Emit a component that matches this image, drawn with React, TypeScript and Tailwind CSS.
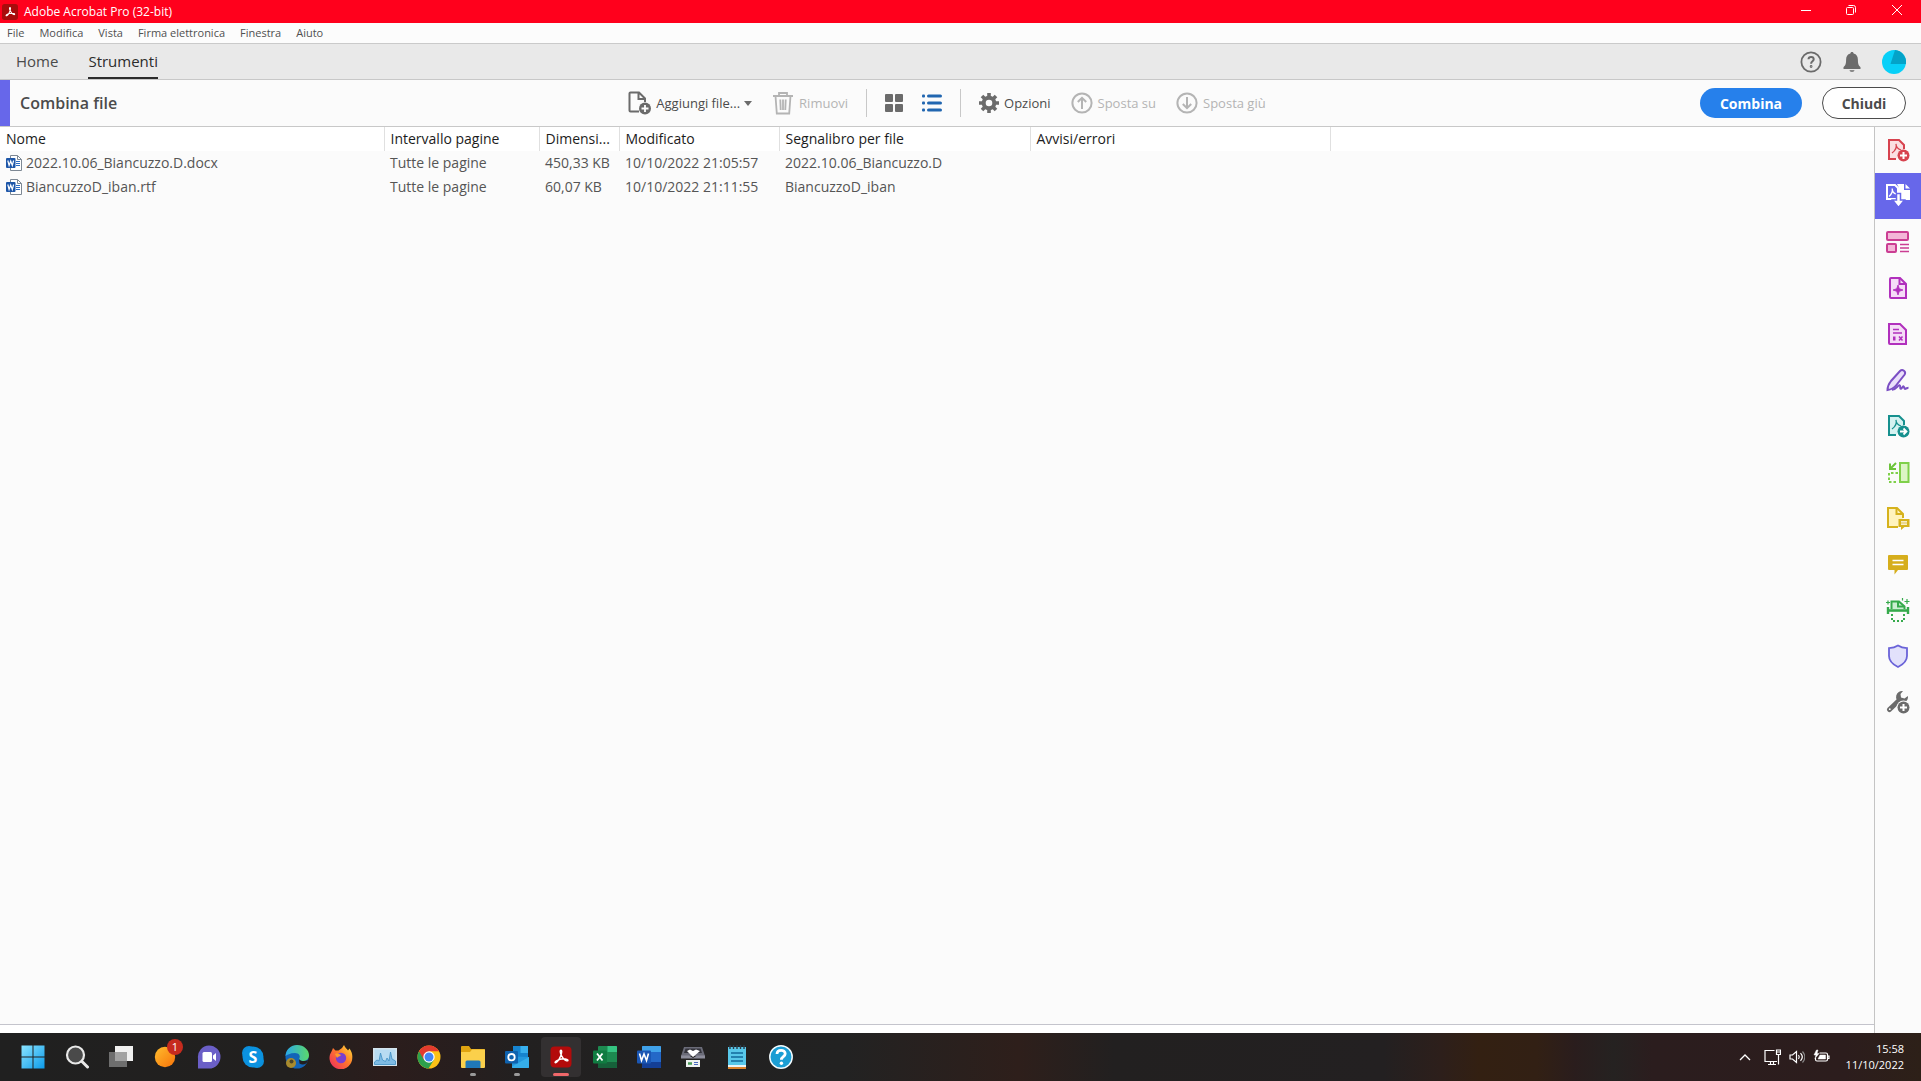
import type { ReactNode } from "react";

const menus = ["File", "Modifica", "Vista", "Firma elettronica", "Finestra", "Aiuto"];

const files = [
  { name: "2022.10.06_Biancuzzo.D.docx", range: "Tutte le pagine", size: "450,33 KB", modified: "10/10/2022 21:05:57", bookmark: "2022.10.06_Biancuzzo.D" },
  { name: "BiancuzzoD_iban.rtf", range: "Tutte le pagine", size: "60,07 KB", modified: "10/10/2022 21:11:55", bookmark: "BiancuzzoD_iban" }
];

const ACROBAT_MARK = "M12 5.2c-1.1 0-1 2.4.3 5 1.2 2.500 3.300 4.900 5.300 5.600 1.600.5 2-.9.3-1.500-2.600-.8-7.600-.1-10.500 1.500-1.800 1-1.600 2.300-.4 1.800 1.800-.8 4.400-5.300 5.300-8.400.6-2.200.6-4-.3-4Z";

export default function App() {
  return (
    <div className="flex h-screen min-h-[760px] flex-col overflow-hidden bg-[#fbfbfb] font-['Open_Sans','Noto_Sans',sans-serif] text-[#4b4b4b]">
      <TitleBar />
      <nav className="flex h-[21px] shrink-0 items-center border-b border-[#cacaca] bg-[#fcfcfc] pl-[7px]">
        {menus.map((menu) => <button key={menu} type="button" className="mr-[15px] text-[11px] leading-4 text-[#505050]">{menu}</button>)}
      </nav>
      <TabBar />
      <Toolbar />
      <div className="flex min-h-0 flex-1">
        <main className="flex min-w-0 flex-1 flex-col">
          <FileTable />
          <div className="mt-auto h-[9px] border-t border-[#c4c4cc] bg-white" />
        </main>
        <ToolRail />
      </div>
      <Taskbar />
    </div>
  );
}

function TitleBar() {
  return (
    <header className="flex h-[23px] shrink-0 items-center bg-[#ff001c] pl-[2px] text-white">
      <svg viewBox="0 0 24 24" className="h-4 w-4"><rect width="24" height="24" rx="4" fill="#a80c0c" /><path d={ACROBAT_MARK} fill="none" stroke="#fff" strokeWidth="1.600" /></svg>
      <h1 className="ml-[6px] flex-1 text-[12px] leading-4">Adobe Acrobat Pro (32-bit)</h1>
      <div className="flex h-5 self-start">
        <button type="button" aria-label="Riduci a icona" className="grid w-[45px] place-items-center"><svg viewBox="0 0 12 12" className="h-3 w-3"><path d="M1 6.500h10" stroke="#fff" /></svg></button>
        <button type="button" aria-label="Ripristina" className="grid w-[45px] place-items-center"><svg viewBox="0 0 12 12" className="h-3 w-3" fill="none" stroke="#fff"><rect x="1.500" y="3.500" width="7" height="7" rx="1" /><path d="M3.500 1.500h5a2 2 0 0 1 2 2v5" /></svg></button>
        <button type="button" aria-label="Chiudi finestra" className="grid w-12 place-items-center"><svg viewBox="0 0 12 12" className="h-3 w-3"><path d="m1 1 10 10M11 1 1 11" stroke="#fff" /></svg></button>
      </div>
    </header>
  );
}

function TabBar() {
  return (
    <div className="flex h-9 shrink-0 items-stretch border-b border-[#c8c8c8] bg-[#e9e9e9] pl-4 pr-[15px]">
      <button type="button" className="text-[15px]">Home</button>
      <button type="button" className="ml-[30px] border-y-2 border-t-transparent border-b-[#2c2c2c] text-[15px] text-[#2c2c2c]">Strumenti</button>
      <div className="ml-auto flex items-center gap-[19px]">
        <button type="button" aria-label="Guida"><svg viewBox="0 0 22 22" className="h-[22px] w-[22px]" fill="none" stroke="#6b6b6b" strokeWidth="1.800"><circle cx="11" cy="11" r="9.600" /><path d="M8.500 8.300c.2-3.200 5.200-3 5.200 0 0 2-2.600 2-2.600 4.400" strokeWidth="2" /><circle cx="11.100" cy="15.500" r=".5" /></svg></button>
        <button type="button" aria-label="Notifiche"><svg viewBox="0 0 22 22" className="h-[22px] w-[22px]" fill="#6b6b6b"><path d="M11 1c1 0 1.600.7 1.600 1.600 3 .7 4.300 3.200 4.300 6.200 0 4.600 1 6 2.600 7.400V18h-17v-1.800C4.100 14.800 5.100 13.400 5.100 8.800c0-3 1.300-5.500 4.300-6.200C9.400 1.700 10 1 11 1ZM8.500 19.200h5c-.4 2.200-4.600 2.200-5 0Z" /></svg></button>
        <button type="button" aria-label="Profilo"><svg viewBox="0 0 24 24" className="h-6 w-6"><circle cx="12" cy="12" r="12" fill="#08d0f8" /><path d="M13 .1A12 12 0 0 1 23.900 14L8.500 14Z" fill="#04a3c8" /></svg></button>
      </div>
    </div>
  );
}

function ToolButton({ label, icon, disabled = false, className = "" }: { label: string; icon: ReactNode; disabled?: boolean; className?: string }) {
  return <button type="button" disabled={disabled} className={`flex items-center gap-[5px] text-[13px] leading-5 ${disabled ? "text-[#b4b4b4]" : "text-[#4b4b4b]"} ${className}`}>{icon}{label}</button>;
}

function Toolbar() {
  return (
    <div className="flex h-[47px] shrink-0 items-center border-b border-[#c8c8c8] bg-[#fbfbfb] pr-[15px]">
      <div className="flex h-full flex-1 items-center border-l-[10px] border-[#6767ea]">
        <h2 className="pl-[10px] text-[16px] font-semibold">Combina file</h2>
      </div>
      <div className="flex items-center pr-[22px]">
        <button type="button" className="flex items-center gap-1 text-[13px] leading-5">
          <svg viewBox="0 0 24 24" className="h-6 w-6" fill="none" stroke="#6b6b6b" strokeWidth="2"><path d="M11 20.500H2.500a1 1 0 0 1-1-1v-17a1 1 0 0 1 1-1H11l6 6V11M10.500 1.500V8H17" /><circle cx="17" cy="17.500" r="6" fill="#6b6b6b" stroke="none" /><path d="M17 14v7M13.500 17.500h7" stroke="#fff" strokeWidth="1.800" /></svg>
          Aggiungi file...
          <svg viewBox="0 0 8 5" className="h-[5px] w-2"><path d="M0 0h8L4 5Z" fill="#6b6b6b" /></svg>
        </button>
        <ToolButton label="Rimuovi" disabled className="ml-5" icon={<svg viewBox="0 0 22 24" className="h-6 w-[22px]" fill="none" stroke="#b4b4b4" strokeWidth="1.800"><path d="M1 5h20M7 5V2h8v3M3.500 5l1.300 17.500h12.400L18.500 5M8.300 8.500l.4 10.500M11 8.500V19M13.700 8.500 13.300 19" /></svg>} />
        <span className="ml-[18px] h-7 w-px bg-[#c8c8c8]" />
        <button type="button" aria-label="Vista miniature" className="ml-[17px]"><svg viewBox="0 0 20 20" className="h-5 w-5" fill="#6b6b6b"><rect x="1" y="1" width="8" height="8" rx="1" /><rect x="11" y="1" width="8" height="8" rx="1" /><rect x="1" y="11" width="8" height="8" rx="1" /><rect x="11" y="11" width="8" height="8" rx="1" /></svg></button>
        <button type="button" aria-label="Vista elenco" className="ml-[17px]"><svg viewBox="0 0 22 20" className="h-5 w-[22px]" fill="#2166b0"><rect x="1" y="1.500" width="3" height="3" rx="1" /><rect x="1" y="8.500" width="3" height="3" rx="1" /><rect x="1" y="15.500" width="3" height="3" rx="1" /><rect x="6" y="1.500" width="15" height="3" rx="1.500" /><rect x="6" y="8.500" width="15" height="3" rx="1.500" /><rect x="6" y="15.500" width="15" height="3" rx="1.500" /></svg></button>
        <span className="ml-[17px] h-7 w-px bg-[#c8c8c8]" />
        <ToolButton label="Opzioni" className="ml-[18px]" icon={<svg viewBox="0 0 20 20" className="h-5 w-5" fill="none" stroke="#6b6b6b"><circle cx="10" cy="10" r="5.300" strokeWidth="4" /><path d="M10 0v4M10 16v4M0 10h4M16 10h4M3 3l3 3M14 14l3 3M17 3l-3 3M6 14l-3 3" strokeWidth="3.600" /></svg>} />
        <ToolButton label="Sposta su" disabled className="ml-5" icon={<MoveIcon path="M11 17V6M6.800 10 11 5.800l4.200 4.200" />} />
        <ToolButton label="Sposta giù" disabled className="ml-5" icon={<MoveIcon path="M11 5v11M6.800 12l4.200 4.200 4.200-4.200" />} />
      </div>
      <div className="flex flex-1 items-center justify-end gap-5">
        <button type="button" className="h-[30px] w-[102px] rounded-full bg-[#2680eb] text-[14px] font-bold text-white">Combina</button>
        <button type="button" className="h-8 w-[84px] rounded-full border border-[#4b4b4b] bg-white text-[14px] font-bold text-[#4b4b4b]">Chiudi</button>
      </div>
    </div>
  );
}

function MoveIcon({ path }: { path: string }) {
  return <svg viewBox="0 0 22 22" className="h-[22px] w-[22px]" fill="none" stroke="#b4b4b4" strokeWidth="2"><circle cx="11" cy="11" r="9.600" /><path d={path} /></svg>;
}

function FileTable() {
  const head = "border-r border-[#e0e0e0] pl-[6px] text-left font-normal";
  const cell = "truncate pl-[6px]";
  return (
    <table className="w-full table-fixed border-collapse whitespace-nowrap text-[14px] leading-6">
      <colgroup>
        <col className="w-[384px]" /><col className="w-[155px]" /><col className="w-20" /><col className="w-40" /><col className="w-[251px]" /><col className="w-[300px]" /><col />
      </colgroup>
      <thead className="bg-white text-[#1c1c1c]">
        <tr className="h-6">
          <th className={head}>Nome</th><th className={head}>Intervallo pagine</th><th className={head}>Dimensi...</th><th className={head}>Modificato</th><th className={head}>Segnalibro per file</th><th className={head}>Avvisi/errori</th><td />
        </tr>
      </thead>
      <tbody className="text-[#555]">
        {files.map((file) => (
          <tr key={file.name} className="h-6">
            <td className={cell}><div className="flex items-center gap-1"><WordFileIcon />{file.name}</div></td>
            <td className={cell}>{file.range}</td>
            <td className="pl-[6px]">{file.size}</td>
            <td className={cell}>{file.modified}</td>
            <td className={cell}>{file.bookmark}</td>
            <td /><td />
          </tr>
        ))}
      </tbody>
    </table>
  );
}

function WordFileIcon() {
  return (
    <svg viewBox="0 0 16 16" className="h-4 w-4 shrink-0">
      <path d="M4.500.5h7l4 4v11h-11Z" fill="#fff" stroke="#7d8894" />
      <path d="M11.500.5v4h4" fill="none" stroke="#7d8894" />
      <path d="M10 6.500h4M10 8.500h4M10 10.500h4" stroke="#2b6cc4" />
      <rect y="3" width="9.500" height="10" rx="1" fill="#1d56a8" />
      <path d="m1.800 5.500 1.300 5 1.600-4.500 1.600 4.500 1.300-5" fill="none" stroke="#fff" strokeWidth="1.200" />
    </svg>
  );
}

function RailIcon({ children }: { children: ReactNode }) {
  return <svg viewBox="0 0 24 24" className="h-6 w-6" fill="none" strokeWidth="2">{children}</svg>;
}

const tools = [
  { label: "Crea PDF", icon: <RailIcon><path d="M10 21H3V2h10l5 5v4" fill="#fbdfe2" stroke="#d7434f" /><path d="M6 15c4-3 5-6 4-9 0 4 2 5 5 6" stroke="#d7434f" strokeWidth="1.300" /><circle cx="17.500" cy="17.500" r="6" fill="#d7434f" /><path d="M17.500 14v7M14 17.500h7" stroke="#fff" /></RailIcon> },
  { label: "Combina file", active: true, icon: <svg viewBox="0 0 26 26" className="h-[26px] w-[26px]" fill="none"><path d="M2 2h8l3 3v11H2Z" stroke="#fff" strokeWidth="2" /><path d="M4 13.500c3-2.500 3.800-4.500 3.200-8 0 3.500 1.500 5 4.300 5.500" stroke="#fff" strokeWidth="1.300" /><path d="M12 1h7v6h6v10H14V5Z" fill="#fff" /><path d="M20.500 1 25 5.500h-4.500Z" fill="#fff" /><path d="M11.500 10.500h4V17h4l-6 7.500-6-7.500h4Z" fill="#fff" stroke="#6767ea" strokeWidth="1.500" /></svg> },
  { label: "Organizza pagine", icon: <RailIcon><g stroke="#cb3e93" fill="#f4b6d8"><rect x="1" y="2" width="21" height="8" rx="1" /><rect x="1" y="14" width="9" height="8" rx="1" /></g><path d="M14 14.500h9M14 18h9M14 21.500h9" stroke="#cb3e93" strokeWidth="1.300" /></RailIcon> },
  { label: "Migliora PDF", icon: <RailIcon><path d="M5 2h9l6 6v14H5a1 1 0 0 1-1-1V3a1 1 0 0 1 1-1Z" fill="#f5dcf7" stroke="#b130bd" /><path d="M13.500 2v6H20" stroke="#b130bd" /><path d="m12 9 1.300 3.700L17 14l-3.700 1.300L12 19l-1.300-3.700L7 14l3.700-1.300Z" fill="#b130bd" stroke="#b130bd" strokeWidth=".8" /></RailIcon> },
  { label: "Prepara modulo", icon: <RailIcon><path d="M3 2h11l6 6v14H4a1 1 0 0 1-1-1Z" fill="#f5dcf7" stroke="#b130bd" /><path d="M7 7.500h6M7 11h9" stroke="#b130bd" strokeWidth="1.500" /><path d="M7 14.500h2.500v4H7Z" fill="#b130bd" /><path d="m13 14.500 3.500 4M16.500 14.500l-3.500 4" stroke="#b130bd" strokeWidth="1.500" /></RailIcon> },
  { label: "Compila e firma", icon: <RailIcon><path d="M1.500 22c0-3.500 1.500-6.500 3.500-9L14 3c2.500-2.500 6.500.5 4.500 3.800L10 17.500c-2 2.500-4.500 4-8.500 4.500Z" fill="#eadffa" stroke="#7b4fc4" /><path d="M6 21.800c4 .2 6-5 7.500-4.500s0 4 1.500 3.500 1.500-3 2.500-2.500.500 3 2 2.500 1.500-1 3-1" stroke="#7b4fc4" /></RailIcon> },
  { label: "Esporta PDF", icon: <RailIcon><path d="M10 21H3V2h10l5 5v4" fill="#d5f2f1" stroke="#16908e" /><path d="M6 15c4-3 5-6 4-9 0 4 2 5 5 6" stroke="#16908e" strokeWidth="1.300" /><circle cx="17.500" cy="17.500" r="6" fill="#16908e" /><path d="M14 17.500h6M17.500 14.500l3 3-3 3" stroke="#fff" strokeWidth="1.800" /></RailIcon> },
  { label: "Modifica pagine", icon: <RailIcon><rect x="14" y="3" width="8.500" height="19" fill="#dcf5c5" stroke="#7fd04a" /><path d="M12 13H3v9h9" stroke="#7fd04a" strokeDasharray="2.500 2" /><path d="M10 3 4.500 8.500M4 3.500V9h6" stroke="#6cc43a" /></RailIcon> },
  { label: "Invia per commenti", icon: <RailIcon><path d="M12 21H2V2h9l6 6v4" fill="#fff3bd" stroke="#d6b21c" /><path d="M10.500 2v6H17" stroke="#d6b21c" /><path d="M12.500 13h11v8h-5l-3.500 3v-3h-2.500Z" fill="#d6b21c" /><path d="M15 15.800h6M15 18.200h6" stroke="#fff" strokeWidth="1.200" /></RailIcon> },
  { label: "Commento", icon: <RailIcon><path d="M3 3h18a1 1 0 0 1 1 1v13a1 1 0 0 1-1 1h-9l-3.500 4.500V18H3a1 1 0 0 1-1-1V4a1 1 0 0 1 1-1Z" fill="#d6ae1c" /><path d="M6.500 8.500h11M6.500 12.500h11" stroke="#fff" strokeWidth="1.600" /></RailIcon> },
  { label: "Scansione e OCR", icon: <RailIcon><path d="M5.500 11V3.500H13l5.500 5V11" fill="#ccefd3" stroke="#36aa4c" /><path d="M12 3v5.500h6" stroke="#36aa4c" /><path d="M2 9v7M22 9v7" stroke="#36aa4c" strokeWidth="2.400" /><path d="M1 12.500h22" stroke="#36aa4c" strokeWidth="2.600" /><path d="M6 16v7h12v-7" stroke="#36aa4c" strokeDasharray="2 2" /><path d="M2 2.500v4M0 4.500h4M21 1v5M18.500 3.500h5M16.500 0v2.500" stroke="#36aa4c" strokeWidth="1.200" /></RailIcon> },
  { label: "Proteggi", icon: <RailIcon><path d="M12 1.500c3 2 5.500 2.500 9 2.700V12c0 5-4 8.500-9 11-5-2.500-9-6-9-11V4.200c3.500-.2 6-.7 9-2.700Z" fill="#e2e1fb" stroke="#6a63d8" strokeWidth="1.800" /></RailIcon> },
  { label: "Altri strumenti", icon: <RailIcon><path d="M3.500 19.500 13 10.500" stroke="#6b6b6b" strokeWidth="5" strokeLinecap="round" /><path d="M17 1a6 6 0 1 0 4.500 8.500c.5-1 .6-2.300.4-3.500L18.500 8.500 15 7.500 14.500 4Z" fill="#6b6b6b" /><circle cx="17.500" cy="17.500" r="7" fill="#fbfbfb" /><circle cx="17.500" cy="17.500" r="6" fill="#6b6b6b" /><path d="M17.500 14v7M14 17.500h7" stroke="#fff" /><circle cx="3.800" cy="19.200" r=".9" fill="#fff" /></RailIcon> }
];

function ToolRail() {
  return (
    <aside className="flex w-[47px] shrink-0 flex-col border-l border-[#c4c4c4] bg-[#fbfbfb]">
      {tools.map((tool) => <button key={tool.label} type="button" aria-label={tool.label} className={`grid h-[46px] w-full shrink-0 place-items-center ${tool.active ? "bg-[#6767ea]" : ""}`}>{tool.icon}</button>)}
    </aside>
  );
}

function AppIcon({ children }: { children: ReactNode }) {
  return <svg viewBox="0 0 24 24" className="h-6 w-6">{children}</svg>;
}

const apps: { label: string; icon: ReactNode; state?: "open" | "active"; badge?: string }[] = [
  { label: "Start", icon: <AppIcon><defs><linearGradient id="win" x1="0" y1="0" x2="1" y2="1"><stop stopColor="#8ae4ff" /><stop offset="1" stopColor="#0c9bea" /></linearGradient></defs><path d="M.5.500h11v11H.5ZM12.500.5h11v11h-11ZM.5 12.500h11v11H.5ZM12.500 12.500h11v11h-11Z" fill="url(#win)" /></AppIcon> },
  { label: "Cerca", icon: <AppIcon><circle cx="10.500" cy="10" r="8.500" fill="#4a4a4a" stroke="#e8e8e8" strokeWidth="2.200" /><path d="m17 16.500 5.500 5.500" stroke="#e8e8e8" strokeWidth="3" strokeLinecap="round" /></AppIcon> },
  { label: "Visualizzazione attività", icon: <AppIcon><rect x="6" y="1" width="18" height="15" fill="#f0f0f0" /><rect x="0" y="7" width="18" height="15" fill="#777" fillOpacity=".9" /><rect x="6" y="7" width="12" height="9" fill="#a2a2a2" /></AppIcon> },
  { label: "Avast", badge: "1", icon: <AppIcon><defs><linearGradient id="orb" x1="0" y1="0" x2="1" y2="1"><stop stopColor="#ffbd2e" /><stop offset="1" stopColor="#f77309" /></linearGradient></defs><circle cx="12" cy="12" r="10.200" fill="url(#orb)" /></AppIcon> },
  { label: "Chat", icon: <AppIcon><path d="M12 .5A11.500 11.500 0 1 1 12 23.500H1v-10A11.500 11.500 0 0 1 12 .5Z" fill="#6b5fc7" /><rect x="5.500" y="7" width="9.500" height="10" rx="1.500" fill="#fff" /><path d="m16 10.500 3-2.500v8l-3-2.500Z" fill="#fff" /></AppIcon> },
  { label: "Skype", icon: <AppIcon><circle cx="8" cy="8" r="7" fill="#0b8fdb" /><circle cx="16" cy="16" r="7" fill="#0b8fdb" /><circle cx="12" cy="12" r="10.500" fill="#0b92e0" /><text x="12" y="17.500" textAnchor="middle" fontSize="16" fontWeight="700" fill="#fff">S</text></AppIcon> },
  { label: "Edge", icon: <AppIcon><defs><linearGradient id="edge"><stop stopColor="#2aa8e8" /><stop offset="1" stopColor="#5bd86a" /></linearGradient></defs><circle cx="12" cy="12" r="11.500" fill="#1264b8" /><path d="M.5 11C1 4 6 0 12 0c7 0 12 5 12 10 0 4-3 6-6 6s-4-1-4-2c2-3 0-6-4-6-5 0-8 2-9.500 3Z" fill="url(#edge)" /><path d="M14 14c1 2 5 3 9.500 1-2 5-6 5.500-9 3.500Z" fill="#221e1f" /><circle cx="6" cy="18" r="5" fill="#a98b2e" /><circle cx="6.500" cy="16.500" r="2" fill="#4c4528" /></AppIcon> },
  { label: "Firefox", icon: <AppIcon><defs><linearGradient id="fox" x1="1" y1="0" x2="0" y2="1"><stop stopColor="#ffe53b" /><stop offset=".45" stopColor="#ff7a2a" /><stop offset="1" stopColor="#ec2464" /></linearGradient></defs><path d="M3 5.500 4 3l2.500 2.500h3L13 3l2-3c1 2.500 3 4 4 5.500l1.500-2C23 7 23.500 10 23.300 12.500A11.400 11.400 0 1 1 1 9.500Z" fill="url(#fox)" /><circle cx="12" cy="13" r="5.200" fill="#7a3fd0" /><path d="M6 9c3-1 4 0 6 1-1 2-3 1-4 3Z" fill="#ff9a2a" /></AppIcon> },
  { label: "Monitoraggio risorse", icon: <AppIcon><rect x="0" y="3" width="24" height="18" fill="#d4e4ee" /><rect x="1.500" y="4.500" width="21" height="15" fill="#b8dcf2" /><path d="M1.500 17 4 15l2 1 1.500-8 2 7 3 1.500L14 13l2 3 1.500-9L19 14l3.500 2v3.500h-21Z" fill="#7ebbe4" stroke="#3f8fc4" strokeWidth=".8" /></AppIcon> },
  { label: "Chrome", icon: <AppIcon><circle cx="12" cy="12" r="11.500" fill="#fbc116" /><path d="M2 6.300A11.500 11.500 0 0 0 11.500 23.500L17 14.800 12 12Z" fill="#2da04c" /><path d="M2 6.300 7 15l5-8.700h10A11.500 11.500 0 0 0 2 6.300Z" fill="#e33b2e" /><circle cx="12" cy="12" r="5.700" fill="#fff" /><circle cx="12" cy="12" r="4.500" fill="#4285f4" /></AppIcon> },
  { label: "Esplora file", state: "open", icon: <AppIcon><path d="M0 2a1 1 0 0 1 1-1h7l2 3h13a1 1 0 0 1 1 1v4H0Z" fill="#e0a410" /><path d="M0 7h9l2-2.500h13V22a1 1 0 0 1-1 1H1a1 1 0 0 1-1-1Z" fill="#fbd04b" /><path d="M4.500 23v-6a1.500 1.500 0 0 1 1.500-1.500h12a1.500 1.500 0 0 1 1.500 1.500v6Z" fill="#1f78b8" /></AppIcon> },
  { label: "Outlook", state: "open", icon: <AppIcon><rect x="8" y="1" width="15" height="14" fill="#1684cf" /><path d="M15.500 1H23v7h-7.500Z" fill="#38b0ee" /><path d="M7 11.500 24 12v10a1 1 0 0 1-1 1H8a1 1 0 0 1-1-1Z" fill="#2398de" /><path d="m24 12-17 9.500v.5a1 1 0 0 0 1 1h15a1 1 0 0 0 1-1Z" fill="#35aeea" /><rect y="6" width="13" height="12.500" rx="1" fill="#0f62ae" /><circle cx="6.500" cy="12.200" r="3.200" fill="none" stroke="#fff" strokeWidth="1.800" /></AppIcon> },
  { label: "Adobe Acrobat", state: "active", icon: <AppIcon><rect x="1.500" y="1.500" width="21" height="21" rx="4" fill="#b30b0b" /><path d={ACROBAT_MARK} fill="none" stroke="#fff" strokeWidth="1.400" /></AppIcon> },
  { label: "Excel", icon: <AppIcon><rect x="5" y="1" width="19" height="22" rx="1" fill="#1d8a50" /><path d="M14.500 1H23a1 1 0 0 1 1 1v5h-9.500Z" fill="#35c481" /><path d="M5 17h19v5a1 1 0 0 1-1 1H6a1 1 0 0 1-1-1Z" fill="#16613a" /><rect y="5.500" width="14" height="13" rx="1" fill="#107c41" /><path d="m4 8.500 5.500 7M9.500 8.500l-5.500 7" stroke="#fff" strokeWidth="1.800" /></AppIcon> },
  { label: "Word", icon: <AppIcon><rect x="5" y="1" width="19" height="22" rx="1" fill="#2468c8" /><path d="M5 2a1 1 0 0 1 1-1h17a1 1 0 0 1 1 1v5H5Z" fill="#40a2ea" /><path d="M5 17h19v5a1 1 0 0 1-1 1H6a1 1 0 0 1-1-1Z" fill="#143f96" /><rect y="5.500" width="14" height="13" rx="1" fill="#1a56b4" /><path d="m2.500 8.500 2 7 2.500-6.500 2.500 6.500 2-7" fill="none" stroke="#fff" strokeWidth="1.600" /></AppIcon> },
  { label: "Scanner", icon: <AppIcon><path d="M3 2h18l3 9H0Z" fill="#6a6b78" /><path d="M4.500 3.500h15L21 8H3Z" fill="#34343c" /><path d="m6 6 3-1.500 3 1.500 3-1.500L19 6l-7 6Z" fill="#fff" /><path d="M0 10.500h8l4 2.500 4-2.500h8v3H0Z" fill="#8b8c9a" /><rect x="5" y="15" width="14" height="7" fill="#eef2f0" /><path d="M7 18.500h4" stroke="#4a9a58" strokeWidth="2.500" /><path d="M13 17.500h4M13 19.500h4" stroke="#4a6ac0" /></AppIcon> },
  { label: "Blocco note", icon: <AppIcon><rect x="3" y="2" width="18" height="20" fill="#58c8ea" /><path d="M3 21h18v3H3Z" fill="#d9822b" /><path d="M3 20h18v2H3Z" fill="#e8f4f8" /><path d="M6 8h12M6 12h12M6 16h12" stroke="#126a9c" strokeWidth="1.500" /><path d="M5 0v4M8.500 0v4M12 0v4M15.500 0v4M19 0v4" stroke="#2a3b48" strokeWidth="1.400" /></AppIcon> },
  { label: "Guida", icon: <AppIcon><circle cx="12" cy="12" r="11.200" fill="#1b9ed4" stroke="#f2fafd" strokeWidth="1.500" /><path d="M8 9c.2-5 8.200-4.800 8.200-.2 0 3-3.800 2.800-3.800 6" fill="none" stroke="#fff" strokeWidth="2.800" /><circle cx="12.400" cy="18.300" r="1.700" fill="#fff" /></AppIcon> }
];

function Taskbar() {
  return (
    <footer className="flex h-12 shrink-0 items-center bg-[linear-gradient(90deg,#202020_0%,#22201f_15%,#2b1d1c_20%,#271e1e_24%,#222020_27%,#222222_44%,#2e1f1b_53%,#222020_58%,#232021_72%,#2d1f1b_75%,#332012_77%,#322014_80%,#2a1d1d_82%,#252221_84%,#2b1d1e_86%,#2c1d1d_96%,#2d2018_100%)] pl-[11px] pr-[17px]">
      {apps.map((app) => (
        <button key={app.label} type="button" aria-label={app.label} className="relative grid h-12 w-11 shrink-0 place-items-center">
          {app.state === "active" ? <span className="absolute inset-x-[2px] inset-y-1 rounded bg-[#333031]" /> : null}
          <span className="relative">{app.icon}</span>
          {app.badge ? <span className="absolute right-1 top-[6px] grid h-4 w-4 place-items-center rounded-full bg-[#c62b1e] text-[11px] leading-4 text-white">{app.badge}</span> : null}
          {app.state ? <span className={`absolute bottom-[5px] h-[3px] rounded-full ${app.state === "active" ? "w-4 bg-[#f0686a]" : "w-[6px] bg-[#9a9a9a]"}`} /> : null}
        </button>
      ))}
      <div className="ml-auto flex items-center text-white">
        <button type="button" aria-label="Mostra icone nascoste" className="mr-[13px]"><svg viewBox="0 0 12 12" className="h-3 w-3"><path d="m1 9 5-5 5 5" fill="none" stroke="#fff" strokeWidth="1.300" /></svg></button>
        <button type="button" aria-label="Rete, volume, batteria" className="mr-4 flex items-center gap-2">
          <svg viewBox="0 0 17 17" className="h-[17px] w-[17px]" fill="none" stroke="#fff" strokeWidth="1.200"><path d="M10.500 1.500H1v11h12M4 15.500h8M6.500 12.500v3M9.500 12.500v3M14.500 6v9.500M12.500 1h4v4.500h-4ZM12.500 3h4" /></svg>
          <svg viewBox="0 0 16 16" className="h-4 w-4" fill="none" stroke="#fff" strokeWidth="1.200"><path d="M1 6v4h2.500L7.500 13.500v-11L3.500 6ZM9.500 6c1 1.300 1 2.700 0 4M11.500 4.200c2.200 2.300 2.200 5.300 0 7.600" /><path d="M13.500 2.500c3 3.500 3 7.500 0 11" stroke="#888" /></svg>
          <svg viewBox="0 0 17 16" className="h-4 w-[17px]" fill="none" stroke="#fff" strokeWidth="1.200"><path d="M6.500 4H13a1.500 1.500 0 0 1 1.500 1.500v5A1.500 1.500 0 0 1 13 12H4a1.500 1.500 0 0 1-1.500-1.500V9M14.500 7h1.500v2.500h-1.500" /><path d="M7 6h5.500v4H5Z M3.500 1 1 6h2L2 9.500 6 4.500H4L5 1Z" fill="#fff" strokeWidth=".5" /></svg>
        </button>
        <time className="text-right text-[11px] leading-4">15:58<br />11/10/2022</time>
      </div>
    </footer>
  );
}
